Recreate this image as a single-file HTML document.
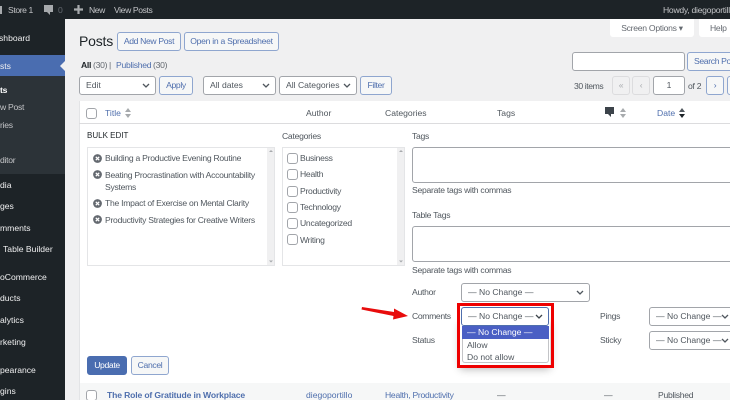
<!DOCTYPE html>
<html><head><meta charset="utf-8">
<style>
html,body{margin:0;padding:0}
body{width:730px;height:400px;overflow:hidden;position:relative;background:#f0f0f1}
#r{left:0;top:0;width:730px;height:400px;overflow:hidden;background:#f0f0f1;font-family:"Liberation Sans",sans-serif;font-size:8.6px;letter-spacing:-.27px;color:#50575e;filter:blur(.35px)}
div{position:absolute;box-sizing:border-box}
.t{white-space:nowrap;line-height:12px;height:12px}
.w{color:#f0f0f1;letter-spacing:0}
.s{color:#c3c4c7}
.ab{letter-spacing:-.4px}
.h{letter-spacing:0}
.l{color:#4f6fad}
.b{border:1px solid #8fa6cf;border-radius:3px;background:#f6f7f7;color:#4f6fad;text-align:center;line-height:17px;white-space:nowrap;letter-spacing:-.35px}
.sel{border:1px solid #a2a5aa;border-radius:3px;background:#fff;line-height:17px;padding-left:6px;white-space:nowrap;overflow:hidden;color:#50575e;letter-spacing:0}
.sel svg{position:absolute;right:5px;top:6px}
.cb{width:11px;height:11px;border:1px solid #a2a5aa;border-radius:3px;background:#fff}
.ta{border:1px solid #a2a5aa;border-radius:3px;background:#fff}
.x{width:9px;height:9px;overflow:visible}
svg{position:absolute}
</style></head><body><div id="r">
<!-- admin bar -->
<div style="left:0;top:0;width:730px;height:19px;background:#1d2327"></div>
<div style="left:0;top:19px;width:65px;height:381px;background:#1d2327"></div>
<div style="left:0;top:6px;width:2px;height:8px;background:#a7aaad"></div>
<div class="t s ab" style="left:8px;top:4px">Store 1</div>
<svg style="left:44px;top:5px" width="10" height="10" viewBox="0 0 10 10"><path d="M0 0H9V7H6V10L3 7H0Z" fill="#a7aaad"/></svg>
<div class="t" style="left:58px;top:4px;color:#646970">0</div>
<svg style="left:74px;top:5px" width="9" height="9" viewBox="0 0 9 9"><path d="M3.4 0H5.6V3.4H9V5.6H5.6V9H3.4V5.6H0V3.4H3.4Z" fill="#a7aaad"/></svg>
<div class="t s ab" style="left:89px;top:4px">New</div>
<div class="t s ab" style="left:114px;top:4px">View Posts</div>
<div class="t s" style="left:663px;top:4px">Howdy, diegoportillo</div>
<!-- sidebar -->
<div style="left:0;top:76px;width:65px;height:98px;background:#2c3338"></div>
<div style="left:0;top:55px;width:65px;height:21px;background:#4a6db0"></div>
<div style="left:60px;top:61px;width:0;height:0;border:5px solid transparent;border-right-color:#f0f0f1;border-left:0"></div>
<div class="t w" style="left:-1px;top:32px">shboard</div>
<div class="t w" style="left:0;top:60px">sts</div>
<div class="t" style="left:0;top:84px;color:#fff;font-weight:bold">ts</div>
<div class="t s" style="left:0;top:101px">w Post</div>
<div class="t s" style="left:0;top:119px">ries</div>
<div class="t s" style="left:0;top:154px">ditor</div>
<div class="t w" style="left:0;top:179px">dia</div>
<div class="t w" style="left:0;top:200px">ges</div>
<div class="t w" style="left:0;top:222px">mments</div>
<div class="t w" style="left:3px;top:243px">Table Builder</div>
<div class="t w" style="left:0;top:271px">oCommerce</div>
<div class="t w" style="left:0;top:292px">ducts</div>
<div class="t w" style="left:0;top:314px">alytics</div>
<div class="t w" style="left:0;top:336px">rketing</div>
<div class="t w" style="left:0;top:364px">pearance</div>
<div class="t w" style="left:0;top:385px">gins</div>
<!-- top -->
<div class="t" style="left:79px;top:35px;font-size:14px;letter-spacing:-.2px;color:#1d2327">Posts</div>
<div class="b" style="left:117px;top:32px;width:64px;height:19px">Add New Post</div>
<div class="b" style="left:184px;top:32px;width:95px;height:19px;letter-spacing:-.28px">Open in a Spreadsheet</div>
<div style="left:610px;top:19px;width:84px;height:18px;background:#fff;border-radius:0 0 3px 3px;text-align:center;line-height:18px;color:#646970">Screen Options &#9662;</div>
<div style="left:699px;top:19px;width:40px;height:18px;background:#fff;border-radius:0 0 3px 3px;line-height:18px;padding-left:11px;color:#646970">Help</div>
<div class="t" style="left:81px;top:59px;color:#1d2327;font-weight:bold">All</div>
<div class="t" style="left:93px;top:59px;color:#646970">(30)</div>
<div class="t" style="left:109px;top:59px;color:#646970">|</div>
<div class="t l" style="left:116px;top:59px">Published</div>
<div class="t" style="left:153px;top:59px;color:#646970">(30)</div>
<div class="ta" style="left:572px;top:52px;width:113px;height:19px"></div>
<div class="b" style="left:687px;top:52px;width:60px;height:19px;text-align:left;padding-left:6px">Search Posts</div>
<div class="sel" style="left:79px;top:76px;width:77px;height:19px">Edit<svg style="right:5px;top:6px" width="8" height="6"><path d="M1 1L4 4L7 1" fill="none" stroke="#50575e" stroke-width="1.3"/></svg></div>
<div class="b" style="left:159px;top:76px;width:34px;height:19px">Apply</div>
<div class="sel" style="left:203px;top:76px;width:73px;height:19px">All dates<svg width="8" height="6"><path d="M1 1L4 4L7 1" fill="none" stroke="#50575e" stroke-width="1.3"/></svg></div>
<div class="sel" style="left:279px;top:76px;width:78px;height:19px">All Categories<svg width="8" height="6"><path d="M1 1L4 4L7 1" fill="none" stroke="#50575e" stroke-width="1.3"/></svg></div>
<div class="b" style="left:360px;top:76px;width:32px;height:19px">Filter</div>
<div class="t" style="left:574px;top:80px;letter-spacing:-.4px">30 items</div>
<div class="b" style="left:612px;top:76px;width:18px;height:19px;border-color:#dcdcde;color:#a7aaad;background:#f0f0f1">&laquo;</div>
<div class="b" style="left:632px;top:76px;width:18px;height:19px;border-color:#dcdcde;color:#a7aaad;background:#f0f0f1">&lsaquo;</div>
<div class="sel" style="left:653px;top:76px;width:32px;height:19px;padding:0;text-align:center">1</div>
<div class="t" style="left:688px;top:80px">of 2</div>
<div class="b" style="left:706px;top:76px;width:18px;height:19px">&rsaquo;</div>
<div class="b" style="left:727px;top:76px;width:18px;height:19px">&raquo;</div>
<!-- table -->
<div style="left:79px;top:101px;width:660px;height:299px;background:#fff;border-left:1px solid #e3e4e6"></div>
<div style="left:79px;top:123px;width:660px;height:1px;background:#dcdcde"></div>
<div class="cb" style="left:86px;top:108px"></div>
<div class="t l h" style="left:105px;top:107px">Title</div>
<svg style="left:125px;top:108px" width="6" height="10" viewBox="0 0 6 10"><path d="M3 0L6 4H0ZM3 10L0 6H6Z" fill="#a7aaad"/></svg>
<div class="t h" style="left:306px;top:107px">Author</div>
<div class="t h" style="left:385px;top:107px">Categories</div>
<div class="t h" style="left:497px;top:107px">Tags</div>
<svg style="left:605px;top:107px" width="9" height="10" viewBox="0 0 9 10"><path d="M0 0H9V7H6V10L3 7H0Z" fill="#3c434a"/></svg>
<svg style="left:620px;top:108px" width="6" height="10" viewBox="0 0 6 10"><path d="M3 0L6 4H0ZM3 10L0 6H6Z" fill="#a7aaad"/></svg>
<div class="t l h" style="left:657px;top:107px">Date</div>
<svg style="left:679px;top:108px" width="6" height="10" viewBox="0 0 6 10"><path d="M3 0L6 4H0Z" fill="#50575e"/><path d="M3 10L0 6H6Z" fill="#1d2327"/></svg>
<!-- bulk -->
<div class="t" style="left:87px;top:130px;color:#1d2327;font-size:8px;letter-spacing:0">BULK EDIT</div>
<div class="t" style="left:282px;top:130px">Categories</div>
<div class="t" style="left:412px;top:130px">Tags</div>
<div style="left:87px;top:147px;width:188px;height:119px;border:1px solid #e4e5e7;background:#fff"></div>
<div style="left:267px;top:148px;width:7px;height:117px;background:#f0f0f1"></div>
<svg style="left:269px;top:150px" width="4" height="114" viewBox="0 0 4 114"><path d="M2 0L4 2H0ZM2 112.5L0 110.5H4Z" fill="#a7aaad"/></svg>
<div style="left:282px;top:147px;width:123px;height:119px;border:1px solid #e4e5e7;background:#fff"></div>
<div style="left:397px;top:148px;width:7px;height:117px;background:#f0f0f1"></div>
<svg style="left:399px;top:150px" width="4" height="114" viewBox="0 0 4 114"><path d="M2 0L4 2H0ZM2 112.5L0 110.5H4Z" fill="#a7aaad"/></svg>
<svg class="x" style="left:93px;top:154px" viewBox="0 0 9 9"><circle cx="4.5" cy="4.5" r="4.4" fill="#646970"/><path d="M2.8 2.8L6.2 6.2M6.2 2.8L2.8 6.2" stroke="#fff" stroke-width="1.3"/></svg>
<div class="t" style="left:105px;top:152px">Building a Productive Evening Routine</div>
<svg class="x" style="left:93px;top:170px" viewBox="0 0 9 9"><circle cx="4.5" cy="4.5" r="4.4" fill="#646970"/><path d="M2.8 2.8L6.2 6.2M6.2 2.8L2.8 6.2" stroke="#fff" stroke-width="1.3"/></svg>
<div class="t" style="left:105px;top:169px">Beating Procrastination with Accountability</div>
<div class="t" style="left:105px;top:181px">Systems</div>
<svg class="x" style="left:93px;top:199px" viewBox="0 0 9 9"><circle cx="4.5" cy="4.5" r="4.4" fill="#646970"/><path d="M2.8 2.8L6.2 6.2M6.2 2.8L2.8 6.2" stroke="#fff" stroke-width="1.3"/></svg>
<div class="t" style="left:105px;top:197px">The Impact of Exercise on Mental Clarity</div>
<svg class="x" style="left:93px;top:215px" viewBox="0 0 9 9"><circle cx="4.5" cy="4.5" r="4.4" fill="#646970"/><path d="M2.8 2.8L6.2 6.2M6.2 2.8L2.8 6.2" stroke="#fff" stroke-width="1.3"/></svg>
<div class="t" style="left:105px;top:214px">Productivity Strategies for Creative Writers</div>
<div class="cb" style="left:287px;top:153px"></div><div class="t" style="left:300px;top:152px">Business</div>
<div class="cb" style="left:287px;top:169px"></div><div class="t" style="left:300px;top:168px">Health</div>
<div class="cb" style="left:287px;top:186px"></div><div class="t" style="left:300px;top:185px">Productivity</div>
<div class="cb" style="left:287px;top:202px"></div><div class="t" style="left:300px;top:201px">Technology</div>
<div class="cb" style="left:287px;top:218px"></div><div class="t" style="left:300px;top:217px">Uncategorized</div>
<div class="cb" style="left:287px;top:234px"></div><div class="t" style="left:300px;top:234px">Writing</div>
<div class="ta" style="left:412px;top:147px;width:330px;height:36px"></div>
<div class="t" style="left:412px;top:184px">Separate tags with commas</div>
<div class="t" style="left:412px;top:209px">Table Tags</div>
<div class="ta" style="left:412px;top:226px;width:330px;height:36px"></div>
<div class="t" style="left:412px;top:264px">Separate tags with commas</div>
<div class="t" style="left:412px;top:286px">Author</div>
<div class="sel" style="left:461px;top:283px;width:129px;height:19px">&mdash; No Change &mdash;<svg width="8" height="6"><path d="M1 1L4 4L7 1" fill="none" stroke="#50575e" stroke-width="1.3"/></svg></div>
<div class="t" style="left:412px;top:310px;letter-spacing:-.35px">Comments</div>
<div class="t" style="left:412px;top:334px">Status</div>
<div class="t" style="left:600px;top:310px">Pings</div>
<div class="t" style="left:600px;top:334px">Sticky</div>
<div class="sel" style="left:649px;top:307px;width:95px;height:19px">&mdash; No Change &mdash;<svg style="right:14px" width="8" height="6"><path d="M1 1L4 4L7 1" fill="none" stroke="#50575e" stroke-width="1.3"/></svg></div>
<div class="sel" style="left:649px;top:331px;width:95px;height:19px">&mdash; No Change &mdash;<svg style="right:14px" width="8" height="6"><path d="M1 1L4 4L7 1" fill="none" stroke="#50575e" stroke-width="1.3"/></svg></div>
<!-- dropdown -->
<div style="left:460px;top:320px;width:90px;height:46px;box-shadow:0 3px 8px rgba(0,0,0,.3)"></div>
<div class="sel" style="left:461px;top:307px;width:88px;height:19px;border-color:#4f6fad">&mdash; No Change &mdash;<svg width="8" height="6"><path d="M1 1L4 4L7 1" fill="none" stroke="#3c434a" stroke-width="1.3"/></svg></div>
<div style="left:462px;top:326px;width:87px;height:37px;background:#fff;border:1px solid #c3c4c7;border-top:0;border-radius:0 0 3px 3px"></div>
<div class="t" style="left:462px;top:326px;width:87px;height:13px;background:#4a5fc4;color:#fff;padding-left:5px;line-height:13px;letter-spacing:0">&mdash; No Change &mdash;</div>
<div class="t h" style="left:467px;top:339px">Allow</div>
<div class="t h" style="left:467px;top:351px">Do not allow</div>
<div style="left:457px;top:303px;width:97px;height:65px;border:3px solid #e00"></div>
<svg style="left:360px;top:304px" width="50" height="18" viewBox="0 0 50 18"><path d="M2 3L34 8L34 4.5L48 12L33 15.5L33.5 12L1.5 5.5Z" fill="#e80c0c"/></svg>
<!-- buttons -->
<div class="b" style="left:87px;top:356px;width:40px;height:19px;background:#4a6db0;border-color:#4a6db0;color:#fff">Update</div>
<div class="b" style="left:131px;top:356px;width:38px;height:19px">Cancel</div>
<!-- row -->
<div style="left:80px;top:383px;width:650px;height:17px;background:#f6f7f7"></div>
<div class="cb" style="left:86px;top:390px"></div>
<div class="t l" style="left:107px;top:389px;font-weight:bold;letter-spacing:-.15px">The Role of Gratitude in Workplace</div>
<div class="t l h" style="left:306px;top:389px">diegoportillo</div>
<div class="t l" style="left:385px;top:389px">Health, Productivity</div>
<div class="t" style="left:497px;top:389px">&mdash;</div>
<div class="t" style="left:604px;top:389px">&mdash;</div>
<div class="t" style="left:658px;top:389px">Published</div>
</div></body></html>
